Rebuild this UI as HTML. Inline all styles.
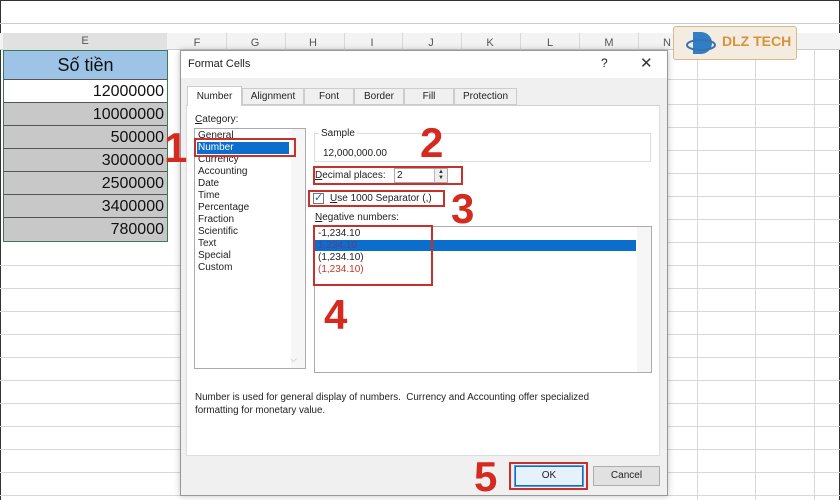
<!DOCTYPE html>
<html><head><meta charset="utf-8"><style>
*{margin:0;padding:0;box-sizing:border-box}
body{width:840px;height:500px;overflow:hidden;background:#fff;font-family:"Liberation Sans",sans-serif;position:relative}
.a{position:absolute}
.t{font-size:10px;color:#222;white-space:nowrap}
.big{position:absolute;color:#d42a1f;font-weight:bold;font-size:42px;line-height:1;font-family:"Liberation Sans",sans-serif}
.rb{position:absolute;border:2px solid #c9302c}
</style></head><body>
<div class="a" style="left:0;top:0;width:840px;height:500px;border:1px solid #333;border-bottom:none"></div>
<div class="a" style="left:0;top:23px;width:840px;height:1px;background:#ccc"></div>
<div class="a" style="left:0;top:33px;width:840px;height:17px;background:#f3f3f3;border-bottom:1px solid #ccc"></div>
<div class="a" style="left:3px;top:33px;width:164px;height:17px;background:#e1e1e1;text-align:center;font-size:11px;color:#555;line-height:17px">E</div>
<svg class="a" style="left:0;top:0" width="840" height="500">
<g stroke="#d8d8d8" stroke-width="1">
<line x1="697.5" y1="50" x2="697.5" y2="500"/><line x1="755.5" y1="50" x2="755.5" y2="500"/><line x1="814.5" y1="50" x2="814.5" y2="500"/>
<line x1="226.5" y1="33" x2="226.5" y2="50"/><line x1="285.5" y1="33" x2="285.5" y2="50"/><line x1="344.5" y1="33" x2="344.5" y2="50"/><line x1="402.5" y1="33" x2="402.5" y2="50"/><line x1="461.5" y1="33" x2="461.5" y2="50"/><line x1="520.5" y1="33" x2="520.5" y2="50"/><line x1="579.5" y1="33" x2="579.5" y2="50"/><line x1="638.5" y1="33" x2="638.5" y2="50"/>
<line x1="668" y1="79.5" x2="840" y2="79.5"/><line x1="668" y1="104.5" x2="840" y2="104.5"/><line x1="668" y1="127.5" x2="840" y2="127.5"/><line x1="668" y1="150.5" x2="840" y2="150.5"/><line x1="668" y1="173.5" x2="840" y2="173.5"/><line x1="668" y1="196.5" x2="840" y2="196.5"/><line x1="668" y1="219.5" x2="840" y2="219.5"/><line x1="668" y1="242.5" x2="840" y2="242.5"/><line x1="668" y1="265.5" x2="840" y2="265.5"/><line x1="668" y1="288.5" x2="840" y2="288.5"/><line x1="668" y1="311.5" x2="840" y2="311.5"/><line x1="668" y1="334.5" x2="840" y2="334.5"/><line x1="668" y1="357.5" x2="840" y2="357.5"/><line x1="668" y1="380.5" x2="840" y2="380.5"/><line x1="668" y1="403.5" x2="840" y2="403.5"/><line x1="668" y1="426.5" x2="840" y2="426.5"/><line x1="668" y1="449.5" x2="840" y2="449.5"/><line x1="668" y1="472.5" x2="840" y2="472.5"/><line x1="668" y1="495.5" x2="840" y2="495.5"/>
<line x1="0" y1="265.5" x2="180" y2="265.5"/><line x1="0" y1="288.5" x2="180" y2="288.5"/><line x1="0" y1="311.5" x2="180" y2="311.5"/><line x1="0" y1="334.5" x2="180" y2="334.5"/><line x1="0" y1="357.5" x2="180" y2="357.5"/><line x1="0" y1="380.5" x2="180" y2="380.5"/><line x1="0" y1="403.5" x2="180" y2="403.5"/><line x1="0" y1="426.5" x2="180" y2="426.5"/><line x1="0" y1="449.5" x2="180" y2="449.5"/><line x1="0" y1="472.5" x2="180" y2="472.5"/><line x1="0" y1="495.5" x2="180" y2="495.5"/>
</g>
<g font-family="Liberation Sans" font-size="11" fill="#555" text-anchor="middle">
<text x="197" y="46">F</text><text x="255" y="46">G</text><text x="313" y="46">H</text><text x="372" y="46">I</text><text x="431" y="46">J</text><text x="490" y="46">K</text><text x="550" y="46">L</text><text x="609" y="46">M</text><text x="667" y="46">N</text>
</g>
</svg>
<div class="a" style="left:3px;top:50px;width:165px;height:192px;border:1px solid #3a7a55"></div>
<div class="a" style="left:4px;top:51px;width:163px;height:29px;background:#9dc3e6;border-bottom:1px solid #555;text-align:center;font-size:18px;line-height:29px;color:#111">Số tiền</div>
<div class="a" style="left:4px;top:80px;width:163px;height:161px;font-size:16px;color:#111;text-align:right">
<div style="height:23px;line-height:23px;padding-right:3px;background:#fff;border-bottom:1px solid #555">12000000</div>
<div style="height:23px;line-height:23px;padding-right:3px;background:#c8c8c8;border-bottom:1px solid #555">10000000</div>
<div style="height:23px;line-height:23px;padding-right:3px;background:#c8c8c8;border-bottom:1px solid #555">500000</div>
<div style="height:23px;line-height:23px;padding-right:3px;background:#c8c8c8;border-bottom:1px solid #555">3000000</div>
<div style="height:23px;line-height:23px;padding-right:3px;background:#c8c8c8;border-bottom:1px solid #555">2500000</div>
<div style="height:23px;line-height:23px;padding-right:3px;background:#c8c8c8;border-bottom:1px solid #555">3400000</div>
<div style="height:23px;line-height:23px;padding-right:3px;background:#c8c8c8">780000</div>
</div>
<div class="a" style="left:673px;top:26px;width:124px;height:34px;background:#f4ece0;border:1px solid #d8b98a;border-radius:3px"></div>
<svg class="a" style="left:685px;top:28px" width="40" height="30"><path d="M8 4h8a11 11 0 0 1 0 22H8z" fill="#2e7fc4"/><ellipse cx="16" cy="17" rx="14" ry="5" fill="none" stroke="#3b6fb0" stroke-width="2"/></svg>
<div class="a" style="left:722px;top:33px;font-weight:bold;font-size:14px;color:#d8923a">DLZ TECH</div>
<div class="a" style="left:180px;top:50px;width:488px;height:446px;background:#f0f0f0;border:1px solid #999;box-shadow:0 0 6px rgba(0,0,0,.25)"></div>
<div class="a" style="left:181px;top:51px;width:486px;height:27px;background:#fff"></div>
<div class="a t" style="left:188px;top:58px;font-size:11px">Format Cells</div>
<div class="a t" style="left:601px;top:56px;font-size:12px">?</div>
<div class="a t" style="left:640px;top:54px;font-size:15px;color:#333">✕</div>
<div class="a" style="left:186px;top:105px;width:474px;height:1px;background:#d0d0d0"></div>
<div class="a t" style="left:187px;top:86px;width:55px;height:20px;background:#fff;border:1px solid #ccc;border-bottom:none;text-align:center;line-height:19px">Number</div>
<div class="a t" style="left:242px;top:88px;width:62px;height:17px;border:1px solid #ccc;text-align:center;line-height:16px">Alignment</div>
<div class="a t" style="left:304px;top:88px;width:50px;height:17px;border:1px solid #ccc;text-align:center;line-height:16px">Font</div>
<div class="a t" style="left:354px;top:88px;width:50px;height:17px;border:1px solid #ccc;text-align:center;line-height:16px">Border</div>
<div class="a t" style="left:404px;top:88px;width:50px;height:17px;border:1px solid #ccc;text-align:center;line-height:16px">Fill</div>
<div class="a t" style="left:454px;top:88px;width:63px;height:17px;border:1px solid #ccc;text-align:center;line-height:16px">Protection</div>
<div class="a" style="left:186px;top:106px;width:474px;height:350px;background:#fff;border:1px solid #ddd;border-top:none"></div>
<div class="a t" style="left:195px;top:114px"><u>C</u>ategory:</div>
<div class="a" style="left:194px;top:128px;width:112px;height:241px;border:1px solid #ababab;background:#fff"></div>
<div class="a" style="left:291px;top:129px;width:14px;height:239px;background:#f6f6f6"></div>
<div class="a t" style="left:290px;top:354px;font-size:9px;color:#aaa">⌵</div>
<div class="a" style="left:197px;top:142px;width:92px;height:12px;background:#0b6dcc"></div>
<div class="a t" style="left:198px;top:130px;line-height:12px">General<br><span style="color:#fff">Number</span><br>Currency<br>Accounting<br>Date<br>Time<br>Percentage<br>Fraction<br>Scientific<br>Text<br>Special<br>Custom</div>
<div class="a" style="left:314px;top:133px;width:337px;height:29px;border:1px solid #ddd"></div>
<div class="a t" style="left:319px;top:128px;background:#fff;padding:0 2px">Sample</div>
<div class="a t" style="left:323px;top:148px">12,000,000.00</div>
<div class="a t" style="left:315px;top:170px"><u>D</u>ecimal places:</div>
<div class="a" style="left:394px;top:168px;width:54px;height:15px;border:1px solid #aaa;background:#fff"></div>
<div class="a t" style="left:397px;top:170px">2</div>
<div class="a" style="left:434px;top:169px;width:13px;height:13px;background:#eee;border-left:1px solid #bbb;font-size:6px;text-align:center;line-height:6px;color:#333">▲<br>▼</div>
<div class="a" style="left:313px;top:193px;width:11px;height:11px;border:1px solid #777;background:#fff;color:#1a63c0;font-size:11px;line-height:9px;text-align:center">✓</div>
<div class="a t" style="left:330px;top:193px"><u>U</u>se 1000 Separator (,)</div>
<div class="a t" style="left:315px;top:212px"><u>N</u>egative numbers:</div>
<div class="a" style="left:314px;top:226px;width:338px;height:147px;border:1px solid #ababab;background:#fff"></div>
<div class="a" style="left:637px;top:227px;width:14px;height:145px;background:#f6f6f6"></div>
<div class="a" style="left:315px;top:240px;width:321px;height:11px;background:#0b6dcc"></div>
<div class="a t" style="left:318px;top:228px;line-height:12px">-1,234.10<br><span style="color:#6b3a7a">1,234.10</span><br>(1,234.10)<br><span style="color:#c0392b">(1,234.10)</span></div>
<div class="a t" style="left:195px;top:391px;line-height:13px;font-size:9.8px">Number is used for general display of numbers.&nbsp; Currency and Accounting offer specialized<br>formatting for monetary value.</div>
<div class="a t" style="left:515px;top:466px;width:68px;height:20px;border:1px solid #0b6dcc;background:#e5f1fb;text-align:center;line-height:18px;outline:1px solid #5a9bd8">OK</div>
<div class="a t" style="left:593px;top:466px;width:67px;height:20px;border:1px solid #adadad;background:#e1e1e1;text-align:center;line-height:18px">Cancel</div>
<div class="rb" style="left:194px;top:138px;width:102px;height:19px"></div>
<div class="rb" style="left:313px;top:166px;width:150px;height:19px"></div>
<div class="rb" style="left:308px;top:190px;width:137px;height:17px"></div>
<div class="rb" style="left:313px;top:225px;width:120px;height:61px"></div>
<div class="rb" style="left:509px;top:462px;width:79px;height:28px"></div>
<div class="big" style="left:164px;top:127px">1</div>
<div class="big" style="left:420px;top:122px">2</div>
<div class="big" style="left:451px;top:188px">3</div>
<div class="big" style="left:324px;top:294px">4</div>
<div class="big" style="left:474px;top:456px">5</div>
</body></html>
